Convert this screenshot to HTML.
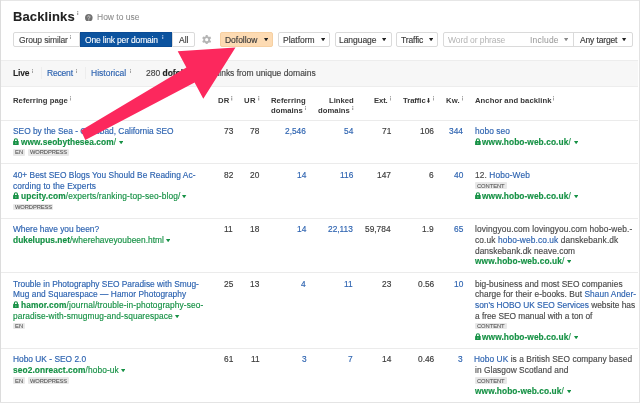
<!DOCTYPE html>
<html><head><meta charset="utf-8"><style>
html,body{margin:0;padding:0;background:#fff;}
body{width:640px;height:403px;position:relative;overflow:hidden;font-family:"Liberation Sans",sans-serif;}
.wrap{position:absolute;left:0;top:0;width:640px;height:403px;background:#fff;}
.t{position:absolute;white-space:nowrap;will-change:transform;}
.t b{font-weight:700;}
</style></head><body><div class="wrap">
<div style="position:absolute;left:0.00px;top:0.00px;width:640.00px;height:1.00px;background:#e6e6e6"></div>
<div style="position:absolute;left:0.00px;top:0.00px;width:1.30px;height:403.00px;background:#dcdcdc"></div>
<div style="position:absolute;left:638.50px;top:0.00px;width:1.50px;height:403.00px;background:#e2e2e2"></div>
<div style="position:absolute;left:0.00px;top:401.50px;width:640.00px;height:1.50px;background:#e4e4e4"></div>
<div class="t" style="left:12.75px;top:10px;font-size:13px;line-height:13px;font-weight:700;color:#222;-webkit-text-stroke-width:0.1px;letter-spacing:0.125px;">Backlinks</div>
<svg style="position:absolute;left:77.30px;top:10.80px" width="1.4" height="4.5" viewBox="0 0 1.4 4.5"><rect x="0.2" y="0" width="1.05" height="0.95" fill="#8f8f8f"/><rect x="0.2" y="1.6" width="1.05" height="2.9" fill="#8f8f8f"/></svg>
<svg style="position:absolute;left:85.2px;top:13.7px" width="7.6" height="7.6" viewBox="0 0 8 8"><circle cx="4" cy="4" r="4" fill="#707070"/><path d="M2.9 3.1a1.15 1.15 0 1 1 1.7 1c-.45.25-.6.45-.6.9v.2" stroke="#d8d8d8" stroke-width="0.95" fill="none" stroke-linecap="round"/><circle cx="4" cy="6.35" r="0.55" fill="#d8d8d8"/></svg>
<div class="t" style="left:96.64px;top:13px;font-size:8.5px;line-height:8.5px;font-weight:400;color:#8a8a8a;-webkit-text-stroke-width:0.05px;letter-spacing:-0.006px;">How to use</div>
<div style="position:absolute;left:13.30px;top:31.60px;width:67.00px;height:15.00px;box-sizing:border-box;background:#fff;border:1px solid #dadada;border-radius:2px 0 0 2px;"></div>
<div class="t" style="left:18.58px;top:36px;font-size:8.5px;line-height:8.5px;font-weight:400;color:#444;-webkit-text-stroke-width:0.15px;letter-spacing:-0.135px;">Group similar</div>
<svg style="position:absolute;left:70.10px;top:34.50px" width="1.4" height="4.5" viewBox="0 0 1.4 4.5"><rect x="0.2" y="0" width="1.05" height="0.95" fill="#8f8f8f"/><rect x="0.2" y="1.6" width="1.05" height="2.9" fill="#8f8f8f"/></svg>
<div style="position:absolute;left:80.00px;top:31.60px;width:92.00px;height:15.00px;box-sizing:border-box;background:#0c539f;border:1px solid #0a4b94;border-radius:0;"></div>
<div class="t" style="left:84.85px;top:36px;font-size:8.5px;line-height:8.5px;font-weight:400;color:#fff;-webkit-text-stroke-width:0.1px;letter-spacing:-0.167px;">One link per domain</div>
<svg style="position:absolute;left:162.40px;top:34.50px" width="1.4" height="4.5" viewBox="0 0 1.4 4.5"><rect x="0.2" y="0" width="1.05" height="0.95" fill="#b3c6e6"/><rect x="0.2" y="1.6" width="1.05" height="2.9" fill="#b3c6e6"/></svg>
<div style="position:absolute;left:171.80px;top:31.60px;width:23.50px;height:15.00px;box-sizing:border-box;background:#fff;border:1px solid #dadada;border-radius:0 2px 2px 0;"></div>
<div class="t" style="left:179.09px;top:36px;font-size:8.5px;line-height:8.5px;font-weight:400;color:#3a3a3a;-webkit-text-stroke-width:0.15px;letter-spacing:-0.038px;">All</div>
<svg style="position:absolute;left:202.2px;top:34.7px" width="9.4" height="9.4" viewBox="0 0 10 10"><g fill="#b5b5b5"><circle cx="5" cy="5" r="3.6"/><rect x="3.9" y="0.05" width="2.2" height="2.6" rx="0.3" transform="rotate(0 5 5)"/><rect x="3.9" y="0.05" width="2.2" height="2.6" rx="0.3" transform="rotate(60 5 5)"/><rect x="3.9" y="0.05" width="2.2" height="2.6" rx="0.3" transform="rotate(120 5 5)"/><rect x="3.9" y="0.05" width="2.2" height="2.6" rx="0.3" transform="rotate(180 5 5)"/><rect x="3.9" y="0.05" width="2.2" height="2.6" rx="0.3" transform="rotate(240 5 5)"/><rect x="3.9" y="0.05" width="2.2" height="2.6" rx="0.3" transform="rotate(300 5 5)"/></g><circle cx="5" cy="5" r="1.7" fill="#fff"/></svg>
<div style="position:absolute;left:219.80px;top:31.60px;width:53.30px;height:15.00px;box-sizing:border-box;background:#fddbb3;border:1px solid #f6d0a2;border-radius:2px;"></div>
<div class="t" style="left:225.02px;top:36px;font-size:8.5px;line-height:8.5px;font-weight:400;color:#3a3a3a;-webkit-text-stroke-width:0.15px;letter-spacing:-0.026px;">Dofollow</div>
<svg style="position:absolute;left:263.80px;top:37.90px" width="4.2" height="3.4" viewBox="0 0 4.2 3.4"><polygon points="0,0 4.2,0 2.1,3.4" fill="#222"/></svg>
<div style="position:absolute;left:277.50px;top:31.60px;width:52.00px;height:15.00px;box-sizing:border-box;background:#fff;border:1px solid #dadada;border-radius:2px;"></div>
<div class="t" style="left:282.89px;top:36px;font-size:8.5px;line-height:8.5px;font-weight:400;color:#3a3a3a;-webkit-text-stroke-width:0.15px;letter-spacing:-0.003px;">Platform</div>
<svg style="position:absolute;left:321.10px;top:37.90px" width="4.2" height="3.4" viewBox="0 0 4.2 3.4"><polygon points="0,0 4.2,0 2.1,3.4" fill="#222"/></svg>
<div style="position:absolute;left:334.50px;top:31.60px;width:57.00px;height:15.00px;box-sizing:border-box;background:#fff;border:1px solid #dadada;border-radius:2px;"></div>
<div class="t" style="left:338.93px;top:36px;font-size:8.5px;line-height:8.5px;font-weight:400;color:#3a3a3a;-webkit-text-stroke-width:0.15px;letter-spacing:-0.050px;">Language</div>
<svg style="position:absolute;left:381.90px;top:37.90px" width="4.2" height="3.4" viewBox="0 0 4.2 3.4"><polygon points="0,0 4.2,0 2.1,3.4" fill="#222"/></svg>
<div style="position:absolute;left:395.60px;top:31.60px;width:42.90px;height:15.00px;box-sizing:border-box;background:#fff;border:1px solid #dadada;border-radius:2px;"></div>
<div class="t" style="left:400.74px;top:36px;font-size:8.5px;line-height:8.5px;font-weight:400;color:#3a3a3a;-webkit-text-stroke-width:0.15px;letter-spacing:-0.128px;">Traffic</div>
<svg style="position:absolute;left:429.00px;top:37.90px" width="4.2" height="3.4" viewBox="0 0 4.2 3.4"><polygon points="0,0 4.2,0 2.1,3.4" fill="#222"/></svg>
<div style="position:absolute;left:442.50px;top:31.60px;width:190.30px;height:15.00px;box-sizing:border-box;background:#fff;border:1px solid #dadada;border-radius:2px;"></div>
<div class="t" style="left:447.86px;top:36px;font-size:8.5px;line-height:8.5px;font-weight:400;color:#b3b3b3;-webkit-text-stroke-width:0px;letter-spacing:-0.086px;">Word or phrase</div>
<div class="t" style="left:529.76px;top:36px;font-size:8.5px;line-height:8.5px;font-weight:400;color:#9a9a9a;-webkit-text-stroke-width:0.05px;letter-spacing:0.194px;">Include</div>
<svg style="position:absolute;left:564.20px;top:37.90px" width="4.2" height="3.4" viewBox="0 0 4.2 3.4"><polygon points="0,0 4.2,0 2.1,3.4" fill="#8a8a8a"/></svg>
<div style="position:absolute;left:573.00px;top:31.60px;width:1.00px;height:15.00px;background:#dadada"></div>
<div class="t" style="left:579.67px;top:36px;font-size:8.5px;line-height:8.5px;font-weight:400;color:#3a3a3a;-webkit-text-stroke-width:0.15px;letter-spacing:-0.144px;">Any target</div>
<svg style="position:absolute;left:622.40px;top:37.90px" width="4.2" height="3.4" viewBox="0 0 4.2 3.4"><polygon points="0,0 4.2,0 2.1,3.4" fill="#222"/></svg>
<div style="position:absolute;left:1.30px;top:59.50px;width:637.20px;height:27.00px;box-sizing:border-box;background:#f7f7f7;border-top:1px solid #ededed;border-bottom:1px solid #ededed"></div>
<div class="t" style="left:12.90px;top:69px;font-size:8.5px;line-height:8.5px;font-weight:700;color:#222;-webkit-text-stroke-width:0.05px;letter-spacing:-0.212px;">Live</div>
<svg style="position:absolute;left:32.00px;top:68.50px" width="1.4" height="4.5" viewBox="0 0 1.4 4.5"><rect x="0.2" y="0" width="1.05" height="0.95" fill="#8f8f8f"/><rect x="0.2" y="1.6" width="1.05" height="2.9" fill="#8f8f8f"/></svg>
<div style="position:absolute;left:40.50px;top:67.20px;width:1.00px;height:11.50px;background:#ededed"></div>
<div class="t" style="left:47.23px;top:69px;font-size:8.5px;line-height:8.5px;font-weight:400;color:#2d63b0;-webkit-text-stroke-width:0.15px;letter-spacing:-0.185px;">Recent</div>
<svg style="position:absolute;left:76.00px;top:68.50px" width="1.4" height="4.5" viewBox="0 0 1.4 4.5"><rect x="0.2" y="0" width="1.05" height="0.95" fill="#8f8f8f"/><rect x="0.2" y="1.6" width="1.05" height="2.9" fill="#8f8f8f"/></svg>
<div style="position:absolute;left:85.00px;top:67.20px;width:1.00px;height:11.50px;background:#ededed"></div>
<div class="t" style="left:91.36px;top:69px;font-size:8.5px;line-height:8.5px;font-weight:400;color:#2d63b0;-webkit-text-stroke-width:0.15px;letter-spacing:0.012px;">Historical</div>
<svg style="position:absolute;left:129.50px;top:68.50px" width="1.4" height="4.5" viewBox="0 0 1.4 4.5"><rect x="0.2" y="0" width="1.05" height="0.95" fill="#8f8f8f"/><rect x="0.2" y="1.6" width="1.05" height="2.9" fill="#8f8f8f"/></svg>
<div class="t" style="left:146.15px;top:69px;font-size:8.5px;line-height:8.5px;font-weight:400;color:#444;-webkit-text-stroke-width:0.15px;letter-spacing:-0.022px;">280 <b style="color:#222">dofollow</b> backlinks from unique domains</div>
<div class="t" style="left:12.97px;top:97px;font-size:7.7px;line-height:7.7px;font-weight:700;color:#383838;-webkit-text-stroke-width:0px;letter-spacing:0.042px;">Referring page</div>
<svg style="position:absolute;left:69.80px;top:96.10px" width="1.4" height="4.5" viewBox="0 0 1.4 4.5"><rect x="0.2" y="0" width="1.05" height="0.95" fill="#8f8f8f"/><rect x="0.2" y="1.6" width="1.05" height="2.9" fill="#8f8f8f"/></svg>
<div class="t" style="left:217.74px;top:97px;font-size:7.7px;line-height:7.7px;font-weight:700;color:#383838;-webkit-text-stroke-width:0px;letter-spacing:0.182px;">DR</div>
<svg style="position:absolute;left:231.40px;top:96.10px" width="1.4" height="4.5" viewBox="0 0 1.4 4.5"><rect x="0.2" y="0" width="1.05" height="0.95" fill="#8f8f8f"/><rect x="0.2" y="1.6" width="1.05" height="2.9" fill="#8f8f8f"/></svg>
<div class="t" style="left:244.38px;top:97px;font-size:7.7px;line-height:7.7px;font-weight:700;color:#383838;-webkit-text-stroke-width:0px;letter-spacing:0.350px;">UR</div>
<svg style="position:absolute;left:258.30px;top:96.10px" width="1.4" height="4.5" viewBox="0 0 1.4 4.5"><rect x="0.2" y="0" width="1.05" height="0.95" fill="#8f8f8f"/><rect x="0.2" y="1.6" width="1.05" height="2.9" fill="#8f8f8f"/></svg>
<div class="t" style="left:270.92px;top:97px;font-size:7.7px;line-height:7.7px;font-weight:700;color:#383838;-webkit-text-stroke-width:0px;letter-spacing:0.053px;">Referring</div>
<div class="t" style="left:271.16px;top:107px;font-size:7.7px;line-height:7.7px;font-weight:700;color:#383838;-webkit-text-stroke-width:0px;letter-spacing:0.026px;">domains</div>
<svg style="position:absolute;left:304.60px;top:105.50px" width="1.4" height="4.5" viewBox="0 0 1.4 4.5"><rect x="0.2" y="0" width="1.05" height="0.95" fill="#8f8f8f"/><rect x="0.2" y="1.6" width="1.05" height="2.9" fill="#8f8f8f"/></svg>
<div class="t" style="left:328.91px;top:97px;font-size:7.7px;line-height:7.7px;font-weight:700;color:#383838;-webkit-text-stroke-width:0px;letter-spacing:0.000px;">Linked</div>
<div class="t" style="left:318.02px;top:107px;font-size:7.7px;line-height:7.7px;font-weight:700;color:#383838;-webkit-text-stroke-width:0px;letter-spacing:0.046px;">domains</div>
<svg style="position:absolute;left:352.20px;top:105.50px" width="1.4" height="4.5" viewBox="0 0 1.4 4.5"><rect x="0.2" y="0" width="1.05" height="0.95" fill="#8f8f8f"/><rect x="0.2" y="1.6" width="1.05" height="2.9" fill="#8f8f8f"/></svg>
<div class="t" style="left:373.97px;top:97px;font-size:7.7px;line-height:7.7px;font-weight:700;color:#383838;-webkit-text-stroke-width:0px;letter-spacing:-0.122px;">Ext.</div>
<svg style="position:absolute;left:389.80px;top:96.10px" width="1.4" height="4.5" viewBox="0 0 1.4 4.5"><rect x="0.2" y="0" width="1.05" height="0.95" fill="#8f8f8f"/><rect x="0.2" y="1.6" width="1.05" height="2.9" fill="#8f8f8f"/></svg>
<div class="t" style="left:402.66px;top:97px;font-size:7.7px;line-height:7.7px;font-weight:700;color:#383838;-webkit-text-stroke-width:0px;letter-spacing:-0.060px;">Traffic</div>
<svg style="position:absolute;left:427.1px;top:97.8px" width="3" height="5.2" viewBox="0 0 3 5.2"><rect x="0.85" y="0" width="1.3" height="3.2" fill="#333"/><polygon points="0,2.7 3,2.7 1.5,5.2" fill="#333"/></svg>
<svg style="position:absolute;left:432.80px;top:96.10px" width="1.4" height="4.5" viewBox="0 0 1.4 4.5"><rect x="0.2" y="0" width="1.05" height="0.95" fill="#8f8f8f"/><rect x="0.2" y="1.6" width="1.05" height="2.9" fill="#8f8f8f"/></svg>
<div class="t" style="left:445.99px;top:97px;font-size:7.7px;line-height:7.7px;font-weight:700;color:#383838;-webkit-text-stroke-width:0px;letter-spacing:0.166px;">Kw.</div>
<svg style="position:absolute;left:461.80px;top:96.10px" width="1.4" height="4.5" viewBox="0 0 1.4 4.5"><rect x="0.2" y="0" width="1.05" height="0.95" fill="#8f8f8f"/><rect x="0.2" y="1.6" width="1.05" height="2.9" fill="#8f8f8f"/></svg>
<div class="t" style="left:475.01px;top:97px;font-size:7.7px;line-height:7.7px;font-weight:700;color:#383838;-webkit-text-stroke-width:0px;letter-spacing:0.044px;">Anchor and backlink</div>
<svg style="position:absolute;left:552.80px;top:96.10px" width="1.4" height="4.5" viewBox="0 0 1.4 4.5"><rect x="0.2" y="0" width="1.05" height="0.95" fill="#8f8f8f"/><rect x="0.2" y="1.6" width="1.05" height="2.9" fill="#8f8f8f"/></svg>
<div style="position:absolute;left:1.30px;top:119.50px;width:637.20px;height:1.00px;background:#ebebeb"></div>
<div style="position:absolute;left:1.30px;top:163.30px;width:637.20px;height:1.00px;background:#ebebeb"></div>
<div style="position:absolute;left:1.30px;top:217.70px;width:637.20px;height:1.00px;background:#ebebeb"></div>
<div style="position:absolute;left:1.30px;top:272.10px;width:637.20px;height:1.00px;background:#ebebeb"></div>
<div style="position:absolute;left:1.30px;top:347.70px;width:637.20px;height:1.00px;background:#ebebeb"></div>
<div class="t" style="left:12.65px;top:127px;font-size:8.35px;line-height:8.35px;font-weight:400;color:#2d63b0;-webkit-text-stroke-width:0.15px;letter-spacing:0.003px;">SEO by the Sea - Carlsbad, California SEO</div>
<svg style="position:absolute;left:13.10px;top:138.10px" width="5.8" height="7.3" viewBox="0 0 5.8 7.3"><path d="M1.4 3.5V2.25a1.5 1.5 0 0 1 3 0v1.25" stroke="#169145" stroke-width="1.2" fill="none"/><rect x="0.1" y="3.1" width="5.6" height="4.2" rx="0.5" fill="#169145"/><rect x="2.55" y="4.3" width="0.7" height="1.6" fill="#fff" opacity="0.75"/></svg>
<div class="t" style="left:20.96px;top:138px;font-size:8.35px;line-height:8.35px;font-weight:400;color:#169145;-webkit-text-stroke-width:0.15px;letter-spacing:0.062px;"><b>www.seobythesea.com</b>/</div>
<svg style="position:absolute;left:119.15px;top:140.70px" width="4.3" height="3.3" viewBox="0 0 4.3 3.3"><polygon points="0,0 4.3,0 2.15,3.3" fill="#169145"/></svg>
<div style="position:absolute;left:13.10px;top:149.20px;width:12.20px;height:6.40px;background:#e8e8e8;border-radius:1px"></div>
<div class="t" style="left:15.20px;top:150px;font-size:5.8px;line-height:5.8px;font-weight:400;color:#5a5a5a;-webkit-text-stroke-width:0.1px;letter-spacing:0.035px;">EN</div>
<div style="position:absolute;left:28.20px;top:149.20px;width:40.40px;height:6.40px;background:#e8e8e8;border-radius:1px"></div>
<div class="t" style="left:29.77px;top:150px;font-size:5.8px;line-height:5.8px;font-weight:400;color:#5a5a5a;-webkit-text-stroke-width:0.1px;letter-spacing:-0.116px;">WORDPRESS</div>
<div class="t" style="left:223.53px;top:127px;font-size:8.35px;line-height:8.35px;font-weight:400;color:#3a3a3a;-webkit-text-stroke-width:0.15px;letter-spacing:0.000px;">73</div>
<div class="t" style="left:250.23px;top:127px;font-size:8.35px;line-height:8.35px;font-weight:400;color:#3a3a3a;-webkit-text-stroke-width:0.15px;letter-spacing:0.000px;">78</div>
<div class="t" style="left:285.43px;top:127px;font-size:8.35px;line-height:8.35px;font-weight:400;color:#2d63b0;-webkit-text-stroke-width:0.15px;letter-spacing:0.000px;">2,546</div>
<div class="t" style="left:343.98px;top:127px;font-size:8.35px;line-height:8.35px;font-weight:400;color:#2d63b0;-webkit-text-stroke-width:0.15px;letter-spacing:0.000px;">54</div>
<div class="t" style="left:381.55px;top:127px;font-size:8.35px;line-height:8.35px;font-weight:400;color:#3a3a3a;-webkit-text-stroke-width:0.15px;letter-spacing:0.000px;">71</div>
<div class="t" style="left:420.23px;top:127px;font-size:8.35px;line-height:8.35px;font-weight:400;color:#3a3a3a;-webkit-text-stroke-width:0.15px;letter-spacing:0.000px;">106</div>
<div class="t" style="left:448.75px;top:127px;font-size:8.35px;line-height:8.35px;font-weight:400;color:#2d63b0;-webkit-text-stroke-width:0.15px;letter-spacing:0.000px;">344</div>
<div class="t" style="left:475.13px;top:127px;font-size:8.35px;line-height:8.35px;font-weight:400;color:#2d63b0;-webkit-text-stroke-width:0.15px;letter-spacing:0.085px;">hobo seo</div>
<svg style="position:absolute;left:475.00px;top:138.10px" width="5.8" height="7.3" viewBox="0 0 5.8 7.3"><path d="M1.4 3.5V2.25a1.5 1.5 0 0 1 3 0v1.25" stroke="#169145" stroke-width="1.2" fill="none"/><rect x="0.1" y="3.1" width="5.6" height="4.2" rx="0.5" fill="#169145"/><rect x="2.55" y="4.3" width="0.7" height="1.6" fill="#fff" opacity="0.75"/></svg>
<div class="t" style="left:481.96px;top:138px;font-size:8.35px;line-height:8.35px;font-weight:400;color:#169145;-webkit-text-stroke-width:0.15px;letter-spacing:0.077px;"><b>www.hobo-web.co.uk</b>/</div>
<svg style="position:absolute;left:573.75px;top:140.70px" width="4.3" height="3.3" viewBox="0 0 4.3 3.3"><polygon points="0,0 4.3,0 2.15,3.3" fill="#169145"/></svg>
<div class="t" style="left:13.39px;top:171px;font-size:8.35px;line-height:8.35px;font-weight:400;color:#2d63b0;-webkit-text-stroke-width:0.15px;letter-spacing:0.030px;">40+ Best SEO Blogs You Should Be Reading Ac-</div>
<div class="t" style="left:13.14px;top:182px;font-size:8.35px;line-height:8.35px;font-weight:400;color:#2d63b0;-webkit-text-stroke-width:0.15px;letter-spacing:0.088px;">cording to the Experts</div>
<svg style="position:absolute;left:13.10px;top:192.10px" width="5.8" height="7.3" viewBox="0 0 5.8 7.3"><path d="M1.4 3.5V2.25a1.5 1.5 0 0 1 3 0v1.25" stroke="#169145" stroke-width="1.2" fill="none"/><rect x="0.1" y="3.1" width="5.6" height="4.2" rx="0.5" fill="#169145"/><rect x="2.55" y="4.3" width="0.7" height="1.6" fill="#fff" opacity="0.75"/></svg>
<div class="t" style="left:21.11px;top:192px;font-size:8.35px;line-height:8.35px;font-weight:400;color:#169145;-webkit-text-stroke-width:0.15px;letter-spacing:0.127px;"><b>upcity.com</b>/experts/ranking-top-seo-blog/</div>
<svg style="position:absolute;left:182.35px;top:194.70px" width="4.3" height="3.3" viewBox="0 0 4.3 3.3"><polygon points="0,0 4.3,0 2.15,3.3" fill="#169145"/></svg>
<div style="position:absolute;left:13.10px;top:203.60px;width:40.40px;height:6.40px;background:#e8e8e8;border-radius:1px"></div>
<div class="t" style="left:14.67px;top:205px;font-size:5.8px;line-height:5.8px;font-weight:400;color:#5a5a5a;-webkit-text-stroke-width:0.1px;letter-spacing:-0.116px;">WORDPRESS</div>
<div class="t" style="left:223.51px;top:171px;font-size:8.35px;line-height:8.35px;font-weight:400;color:#3a3a3a;-webkit-text-stroke-width:0.15px;letter-spacing:0.000px;">82</div>
<div class="t" style="left:250.24px;top:171px;font-size:8.35px;line-height:8.35px;font-weight:400;color:#3a3a3a;-webkit-text-stroke-width:0.15px;letter-spacing:0.000px;">20</div>
<div class="t" style="left:297.28px;top:171px;font-size:8.35px;line-height:8.35px;font-weight:400;color:#2d63b0;-webkit-text-stroke-width:0.15px;letter-spacing:0.000px;">14</div>
<div class="t" style="left:339.94px;top:171px;font-size:8.35px;line-height:8.35px;font-weight:400;color:#2d63b0;-webkit-text-stroke-width:0.15px;letter-spacing:0.000px;">116</div>
<div class="t" style="left:376.72px;top:171px;font-size:8.35px;line-height:8.35px;font-weight:400;color:#3a3a3a;-webkit-text-stroke-width:0.15px;letter-spacing:0.000px;">147</div>
<div class="t" style="left:429.32px;top:171px;font-size:8.35px;line-height:8.35px;font-weight:400;color:#3a3a3a;-webkit-text-stroke-width:0.15px;letter-spacing:0.000px;">6</div>
<div class="t" style="left:453.63px;top:171px;font-size:8.35px;line-height:8.35px;font-weight:400;color:#2d63b0;-webkit-text-stroke-width:0.15px;letter-spacing:0.000px;">40</div>
<div class="t" style="left:475.43px;top:171px;font-size:8.35px;line-height:8.35px;font-weight:400;color:#4a4a4a;-webkit-text-stroke-width:0.15px;letter-spacing:0.105px;">12. <span style="color:#2d63b0">Hobo-Web</span></div>
<div style="position:absolute;left:475.10px;top:182.40px;width:31.50px;height:6.40px;background:#e8e8e8;border-radius:1px"></div>
<div class="t" style="left:476.73px;top:184px;font-size:5.8px;line-height:5.8px;font-weight:400;color:#5a5a5a;-webkit-text-stroke-width:0.1px;letter-spacing:-0.072px;">CONTENT</div>
<svg style="position:absolute;left:475.00px;top:192.10px" width="5.8" height="7.3" viewBox="0 0 5.8 7.3"><path d="M1.4 3.5V2.25a1.5 1.5 0 0 1 3 0v1.25" stroke="#169145" stroke-width="1.2" fill="none"/><rect x="0.1" y="3.1" width="5.6" height="4.2" rx="0.5" fill="#169145"/><rect x="2.55" y="4.3" width="0.7" height="1.6" fill="#fff" opacity="0.75"/></svg>
<div class="t" style="left:481.96px;top:192px;font-size:8.35px;line-height:8.35px;font-weight:400;color:#169145;-webkit-text-stroke-width:0.15px;letter-spacing:0.077px;"><b>www.hobo-web.co.uk</b>/</div>
<svg style="position:absolute;left:573.75px;top:194.70px" width="4.3" height="3.3" viewBox="0 0 4.3 3.3"><polygon points="0,0 4.3,0 2.15,3.3" fill="#169145"/></svg>
<div class="t" style="left:12.79px;top:225px;font-size:8.35px;line-height:8.35px;font-weight:400;color:#2d63b0;-webkit-text-stroke-width:0.15px;letter-spacing:-0.012px;">Where have you been?</div>
<div class="t" style="left:13.01px;top:236px;font-size:8.35px;line-height:8.35px;font-weight:400;color:#169145;-webkit-text-stroke-width:0.15px;letter-spacing:0.031px;"><b>dukelupus.net</b>/wherehaveyoubeen.html</div>
<svg style="position:absolute;left:166.15px;top:238.70px" width="4.3" height="3.3" viewBox="0 0 4.3 3.3"><polygon points="0,0 4.3,0 2.15,3.3" fill="#169145"/></svg>
<div class="t" style="left:223.84px;top:225px;font-size:8.35px;line-height:8.35px;font-weight:400;color:#3a3a3a;-webkit-text-stroke-width:0.15px;letter-spacing:0.000px;">11</div>
<div class="t" style="left:250.26px;top:225px;font-size:8.35px;line-height:8.35px;font-weight:400;color:#3a3a3a;-webkit-text-stroke-width:0.15px;letter-spacing:0.000px;">18</div>
<div class="t" style="left:297.28px;top:225px;font-size:8.35px;line-height:8.35px;font-weight:400;color:#2d63b0;-webkit-text-stroke-width:0.15px;letter-spacing:0.000px;">14</div>
<div class="t" style="left:328.12px;top:225px;font-size:8.35px;line-height:8.35px;font-weight:400;color:#2d63b0;-webkit-text-stroke-width:0.15px;letter-spacing:0.000px;">22,113</div>
<div class="t" style="left:364.77px;top:225px;font-size:8.35px;line-height:8.35px;font-weight:400;color:#3a3a3a;-webkit-text-stroke-width:0.15px;letter-spacing:0.000px;">59,784</div>
<div class="t" style="left:422.34px;top:225px;font-size:8.35px;line-height:8.35px;font-weight:400;color:#3a3a3a;-webkit-text-stroke-width:0.15px;letter-spacing:0.000px;">1.9</div>
<div class="t" style="left:453.64px;top:225px;font-size:8.35px;line-height:8.35px;font-weight:400;color:#2d63b0;-webkit-text-stroke-width:0.15px;letter-spacing:0.000px;">65</div>
<div class="t" style="left:475.27px;top:225px;font-size:8.35px;line-height:8.35px;font-weight:400;color:#4a4a4a;-webkit-text-stroke-width:0.15px;letter-spacing:0.111px;">lovingyou.com lovingyou.com hobo-web.-</div>
<div class="t" style="left:475.18px;top:236px;font-size:8.35px;line-height:8.35px;font-weight:400;color:#4a4a4a;-webkit-text-stroke-width:0.15px;letter-spacing:0.110px;">co.uk <span style="color:#2d63b0">hobo-web.co.uk</span> danskebank.dk</div>
<div class="t" style="left:475.37px;top:247px;font-size:8.35px;line-height:8.35px;font-weight:400;color:#4a4a4a;-webkit-text-stroke-width:0.15px;letter-spacing:0.034px;">danskebank.dk neave.com</div>
<div class="t" style="left:475.04px;top:257px;font-size:8.35px;line-height:8.35px;font-weight:400;color:#169145;-webkit-text-stroke-width:0.15px;letter-spacing:0.111px;"><b>www.hobo-web.co.uk</b>/</div>
<svg style="position:absolute;left:567.15px;top:259.70px" width="4.3" height="3.3" viewBox="0 0 4.3 3.3"><polygon points="0,0 4.3,0 2.15,3.3" fill="#169145"/></svg>
<div class="t" style="left:12.84px;top:280px;font-size:8.35px;line-height:8.35px;font-weight:400;color:#2d63b0;-webkit-text-stroke-width:0.15px;letter-spacing:0.004px;">Trouble in Photography SEO Paradise with Smug-</div>
<div class="t" style="left:13.09px;top:290px;font-size:8.35px;line-height:8.35px;font-weight:400;color:#2d63b0;-webkit-text-stroke-width:0.15px;letter-spacing:0.040px;">Mug and Squarespace — Hamor Photography</div>
<svg style="position:absolute;left:13.10px;top:301.10px" width="5.8" height="7.3" viewBox="0 0 5.8 7.3"><path d="M1.4 3.5V2.25a1.5 1.5 0 0 1 3 0v1.25" stroke="#169145" stroke-width="1.2" fill="none"/><rect x="0.1" y="3.1" width="5.6" height="4.2" rx="0.5" fill="#169145"/><rect x="2.55" y="4.3" width="0.7" height="1.6" fill="#fff" opacity="0.75"/></svg>
<div class="t" style="left:20.75px;top:301px;font-size:8.35px;line-height:8.35px;font-weight:400;color:#169145;-webkit-text-stroke-width:0.15px;letter-spacing:0.117px;"><b>hamor.com</b>/journal/trouble-in-photography-seo-</div>
<div class="t" style="left:13.44px;top:312px;font-size:8.35px;line-height:8.35px;font-weight:400;color:#169145;-webkit-text-stroke-width:0.15px;letter-spacing:0.092px;">paradise-with-smugmug-and-squarespace</div>
<svg style="position:absolute;left:175.35px;top:314.70px" width="4.3" height="3.3" viewBox="0 0 4.3 3.3"><polygon points="0,0 4.3,0 2.15,3.3" fill="#169145"/></svg>
<div style="position:absolute;left:13.10px;top:323.00px;width:12.20px;height:6.40px;background:#e8e8e8;border-radius:1px"></div>
<div class="t" style="left:15.20px;top:324px;font-size:5.8px;line-height:5.8px;font-weight:400;color:#5a5a5a;-webkit-text-stroke-width:0.1px;letter-spacing:0.035px;">EN</div>
<div class="t" style="left:223.54px;top:280px;font-size:8.35px;line-height:8.35px;font-weight:400;color:#3a3a3a;-webkit-text-stroke-width:0.15px;letter-spacing:0.000px;">25</div>
<div class="t" style="left:250.26px;top:280px;font-size:8.35px;line-height:8.35px;font-weight:400;color:#3a3a3a;-webkit-text-stroke-width:0.15px;letter-spacing:0.000px;">13</div>
<div class="t" style="left:301.44px;top:280px;font-size:8.35px;line-height:8.35px;font-weight:400;color:#2d63b0;-webkit-text-stroke-width:0.15px;letter-spacing:0.000px;">4</div>
<div class="t" style="left:344.24px;top:280px;font-size:8.35px;line-height:8.35px;font-weight:400;color:#2d63b0;-webkit-text-stroke-width:0.15px;letter-spacing:0.000px;">11</div>
<div class="t" style="left:381.52px;top:280px;font-size:8.35px;line-height:8.35px;font-weight:400;color:#3a3a3a;-webkit-text-stroke-width:0.15px;letter-spacing:0.000px;">23</div>
<div class="t" style="left:418.12px;top:280px;font-size:8.35px;line-height:8.35px;font-weight:400;color:#3a3a3a;-webkit-text-stroke-width:0.15px;letter-spacing:0.000px;">0.56</div>
<div class="t" style="left:453.68px;top:280px;font-size:8.35px;line-height:8.35px;font-weight:400;color:#2d63b0;-webkit-text-stroke-width:0.15px;letter-spacing:0.000px;">10</div>
<div class="t" style="left:475.08px;top:280px;font-size:8.35px;line-height:8.35px;font-weight:400;color:#4a4a4a;-webkit-text-stroke-width:0.15px;letter-spacing:0.043px;">big-business and most SEO companies</div>
<div class="t" style="left:475.34px;top:290px;font-size:8.35px;line-height:8.35px;font-weight:400;color:#4a4a4a;-webkit-text-stroke-width:0.15px;letter-spacing:0.060px;">charge for their e-books. But <span style="color:#2d63b0">Shaun Ander-</span></div>
<div class="t" style="left:475.00px;top:301px;font-size:8.35px;line-height:8.35px;font-weight:400;color:#4a4a4a;-webkit-text-stroke-width:0.15px;letter-spacing:-0.015px;"><span style="color:#2d63b0">son's HOBO UK SEO Services</span> website has</div>
<div class="t" style="left:475.46px;top:312px;font-size:8.35px;line-height:8.35px;font-weight:400;color:#4a4a4a;-webkit-text-stroke-width:0.15px;letter-spacing:-0.030px;">a free SEO manual with a ton of</div>
<div style="position:absolute;left:475.10px;top:323.00px;width:31.50px;height:6.40px;background:#e8e8e8;border-radius:1px"></div>
<div class="t" style="left:476.73px;top:324px;font-size:5.8px;line-height:5.8px;font-weight:400;color:#5a5a5a;-webkit-text-stroke-width:0.1px;letter-spacing:-0.072px;">CONTENT</div>
<svg style="position:absolute;left:475.00px;top:333.10px" width="5.8" height="7.3" viewBox="0 0 5.8 7.3"><path d="M1.4 3.5V2.25a1.5 1.5 0 0 1 3 0v1.25" stroke="#169145" stroke-width="1.2" fill="none"/><rect x="0.1" y="3.1" width="5.6" height="4.2" rx="0.5" fill="#169145"/><rect x="2.55" y="4.3" width="0.7" height="1.6" fill="#fff" opacity="0.75"/></svg>
<div class="t" style="left:481.96px;top:333px;font-size:8.35px;line-height:8.35px;font-weight:400;color:#169145;-webkit-text-stroke-width:0.15px;letter-spacing:0.077px;"><b>www.hobo-web.co.uk</b>/</div>
<svg style="position:absolute;left:573.75px;top:335.70px" width="4.3" height="3.3" viewBox="0 0 4.3 3.3"><polygon points="0,0 4.3,0 2.15,3.3" fill="#169145"/></svg>
<div class="t" style="left:13.06px;top:355px;font-size:8.35px;line-height:8.35px;font-weight:400;color:#2d63b0;-webkit-text-stroke-width:0.15px;letter-spacing:0.014px;">Hobo UK - SEO 2.0</div>
<div class="t" style="left:13.16px;top:366px;font-size:8.35px;line-height:8.35px;font-weight:400;color:#169145;-webkit-text-stroke-width:0.15px;letter-spacing:0.101px;"><b>seo2.onreact.com</b>/hobo-uk</div>
<svg style="position:absolute;left:121.05px;top:368.70px" width="4.3" height="3.3" viewBox="0 0 4.3 3.3"><polygon points="0,0 4.3,0 2.15,3.3" fill="#169145"/></svg>
<div style="position:absolute;left:13.10px;top:377.40px;width:12.20px;height:6.40px;background:#e8e8e8;border-radius:1px"></div>
<div class="t" style="left:15.20px;top:379px;font-size:5.8px;line-height:5.8px;font-weight:400;color:#5a5a5a;-webkit-text-stroke-width:0.1px;letter-spacing:0.035px;">EN</div>
<div style="position:absolute;left:28.20px;top:377.40px;width:40.40px;height:6.40px;background:#e8e8e8;border-radius:1px"></div>
<div class="t" style="left:29.77px;top:379px;font-size:5.8px;line-height:5.8px;font-weight:400;color:#5a5a5a;-webkit-text-stroke-width:0.1px;letter-spacing:-0.116px;">WORDPRESS</div>
<div class="t" style="left:223.55px;top:355px;font-size:8.35px;line-height:8.35px;font-weight:400;color:#3a3a3a;-webkit-text-stroke-width:0.15px;letter-spacing:0.000px;">61</div>
<div class="t" style="left:250.54px;top:355px;font-size:8.35px;line-height:8.35px;font-weight:400;color:#3a3a3a;-webkit-text-stroke-width:0.15px;letter-spacing:0.000px;">11</div>
<div class="t" style="left:301.53px;top:355px;font-size:8.35px;line-height:8.35px;font-weight:400;color:#2d63b0;-webkit-text-stroke-width:0.15px;letter-spacing:0.000px;">3</div>
<div class="t" style="left:348.22px;top:355px;font-size:8.35px;line-height:8.35px;font-weight:400;color:#2d63b0;-webkit-text-stroke-width:0.15px;letter-spacing:0.000px;">7</div>
<div class="t" style="left:381.58px;top:355px;font-size:8.35px;line-height:8.35px;font-weight:400;color:#3a3a3a;-webkit-text-stroke-width:0.15px;letter-spacing:0.000px;">14</div>
<div class="t" style="left:418.07px;top:355px;font-size:8.35px;line-height:8.35px;font-weight:400;color:#3a3a3a;-webkit-text-stroke-width:0.15px;letter-spacing:0.000px;">0.46</div>
<div class="t" style="left:457.93px;top:355px;font-size:8.35px;line-height:8.35px;font-weight:400;color:#2d63b0;-webkit-text-stroke-width:0.15px;letter-spacing:0.000px;">3</div>
<div class="t" style="left:474.20px;top:355px;font-size:8.35px;line-height:8.35px;font-weight:400;color:#4a4a4a;-webkit-text-stroke-width:0.15px;letter-spacing:0.060px;"><span style="color:#2d63b0">Hobo UK</span> is a British SEO company based</div>
<div class="t" style="left:475.08px;top:366px;font-size:8.35px;line-height:8.35px;font-weight:400;color:#4a4a4a;-webkit-text-stroke-width:0.15px;letter-spacing:0.048px;">in Glasgow Scotland and</div>
<div style="position:absolute;left:475.10px;top:377.40px;width:31.50px;height:6.40px;background:#e8e8e8;border-radius:1px"></div>
<div class="t" style="left:476.73px;top:379px;font-size:5.8px;line-height:5.8px;font-weight:400;color:#5a5a5a;-webkit-text-stroke-width:0.1px;letter-spacing:-0.072px;">CONTENT</div>
<div class="t" style="left:474.78px;top:387px;font-size:8.35px;line-height:8.35px;font-weight:400;color:#169145;-webkit-text-stroke-width:0.15px;letter-spacing:0.082px;"><b>www.hobo-web.co.uk</b>/</div>
<svg style="position:absolute;left:567.15px;top:389.70px" width="4.3" height="3.3" viewBox="0 0 4.3 3.3"><polygon points="0,0 4.3,0 2.15,3.3" fill="#169145"/></svg>
<svg style="position:absolute;left:0;top:0" width="640" height="403" viewBox="0 0 640 403"><polygon points="80.9,130.6 186.4,67.6 177.7,51.2 235.5,47.6 203.3,98.7 194.6,82.6 85.3,140.1" fill="#fc285d"/></svg>
</div></body></html>
